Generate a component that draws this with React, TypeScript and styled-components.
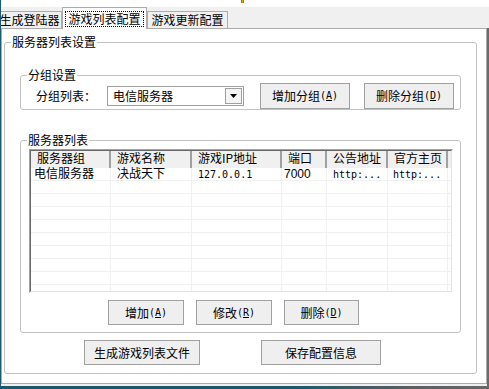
import React from "react";
import styled, { createGlobalStyle } from "styled-components";

const GlobalStyle = createGlobalStyle`
  html, body { margin: 0; padding: 0; background: #ffffff; }
  body {
    font-family: "Noto Sans CJK SC", "Noto Sans", sans-serif;
    font-size: 12px;
    color: #000;
  }
  * { box-sizing: border-box; }
`;

const Window = styled.div`
  width: 489px;
  height: 389px;
  display: flex;
  flex-direction: column;
  border-left: 1px solid #1c586e;
  background: #fff;
  overflow: hidden;
`;

const TopGap = styled.div`
  height: 7px;
  flex: none;
  display: flex;
`;

const Speck = styled.span`
  margin-left: 240px;
  width: 3px;
  height: 3px;
  background: linear-gradient(90deg, #d04020, #e0a020, #3060c0);
`;

const TabStrip = styled.div`
  height: 22px;
  flex: none;
  display: flex;
  align-items: flex-end;
  background: #f0f0f0;
`;

const Tab = styled.div<{ $active?: boolean; $w: number; $first?: boolean }>`
  position: ${(p) => (p.$active ? "relative" : "static")};
  z-index: ${(p) => (p.$active ? 2 : "auto")};
  flex: none;
  width: ${(p) => p.$w}px;
  height: ${(p) => (p.$active ? 22 : 18)}px;
  margin-left: ${(p) => (p.$first ? -5 : 0)}px;
  border: 1px solid #acacac;
  border-bottom: none;
  background: ${(p) => (p.$active ? "#ffffff" : "#f0f0f0")};
  display: flex;
  justify-content: center;
  align-items: flex-start;
  padding-top: ${(p) => (p.$active ? 3 : 2)}px;
  padding-left: ${(p) => (p.$first ? 1 : 0)}px;
  line-height: 12px;
  white-space: nowrap;
`;

const FocusText = styled.span`
  border: 1px dotted #000;
  padding: 0 2px 1px;
  line-height: 13px;
`;

const Middle = styled.div`
  flex: 1;
  margin-top: -1px;
  display: flex;
  align-items: flex-start;
  background: #f0f0f0;
`;

const Panel = styled.div`
  flex: none;
  width: 486px;
  height: 356px;
  border: 1px solid #acacac;
  background: #fff;
  padding: 7px 0 0 2px;
`;

const RightEdge = styled.div`
  flex: none;
  width: 2px;
  align-self: stretch;
  background: #6a6a6a;
`;

const BottomEdge = styled.div`
  height: 3px;
  flex: none;
  background: linear-gradient(90deg, #1d586d 0%, #1d586d 60%, #5a5f62 85%, #686868 100%);
`;

const Group = styled.fieldset<{ $pad: string; $w?: number; $mt?: number }>`
  margin: ${(p) => p.$mt ?? 0}px 0 0 0;
  min-width: 0;
  width: ${(p) => (p.$w ? `${p.$w}px` : "100%")};
  border: 1px solid #c2c2c2;
  border-radius: 3px;
  padding: ${(p) => p.$pad};
`;

const Legend = styled.legend<{ $offset: number }>`
  padding: 0 1px;
  margin-left: ${(p) => p.$offset}px;
  line-height: 12px;
  font-size: 12px;
`;

const ControlRow = styled.div`
  display: flex;
  align-items: center;
  height: 26px;
`;

const Label = styled.span`
  flex: none;
  width: 60px;
  margin-right: 11px;
  line-height: 12px;
  white-space: nowrap;
`;

const Combo = styled.div`
  flex: none;
  width: 137px;
  height: 20px;
  border: 1px solid #a0a0a0;
  background: #fff;
  display: flex;
  align-items: center;
  padding: 0 1px 0 5px;
`;

const ComboText = styled.span`
  flex: 1;
  line-height: 12px;
  white-space: nowrap;
`;

const DropButton = styled.span`
  flex: none;
  width: 17px;
  height: 16px;
  border: 1px solid #a0a0a0;
  background: #f4f4f4;
  display: flex;
  align-items: center;
  justify-content: center;
`;

const Button = styled.button<{ $w: number; $h: number; $ml?: number }>`
  flex: none;
  width: ${(p) => p.$w}px;
  height: ${(p) => p.$h}px;
  margin-left: ${(p) => p.$ml ?? 0}px;
  border: 1px solid #a0a0a0;
  background: #efefef;
  font-family: inherit;
  font-size: 12px;
  color: #000;
  padding: 0;
  line-height: 12px;
  display: flex;
  align-items: center;
  justify-content: center;
  white-space: nowrap;
`;

const Ascii = styled.span`
  font-family: "DejaVu Sans Mono", "Liberation Mono", monospace;
  font-size: 10px;
`;

const Sans = styled.span`
  font-family: "Liberation Sans", Arial, sans-serif;
  font-size: 12px;
`;

const U = styled.span`
  text-decoration: underline;
`;

const ButtonRow = styled.div<{ $mt: number; $ml: number; $gap: number }>`
  display: flex;
  margin-top: ${(p) => p.$mt}px;
  padding-left: ${(p) => p.$ml}px;
  gap: ${(p) => p.$gap}px;
`;

const ListOuter = styled.div`
  width: 424px;
  height: 144px;
  border: 1px solid;
  border-color: #a0a0a0 #ffffff #ffffff #a0a0a0;
`;

const ListInner = styled.div`
  height: 100%;
  border: 1px solid;
  border-color: #696969 #e3e3e3 #e3e3e3 #696969;
  overflow: hidden;
  background: #fff;
`;

const HeaderRow = styled.div`
  display: flex;
  height: 17px;
  background: #f0f0f0;
`;

const HeaderCell = styled.div<{ $w: number }>`
  flex: none;
  width: ${(p) => p.$w}px;
  padding-left: 6px;
  line-height: 11px;
  padding-top: 1px;
  border-right: 2px solid #a0a0a0;
  white-space: nowrap;
`;

const Row = styled.div`
  display: flex;
  height: 13px;
  flex: none;
  border-bottom: 1px solid #f0f0f0;
`;

const Cell = styled.div<{ $w: number; $pad: number }>`
  flex: none;
  width: ${(p) => p.$w}px;
  padding-left: ${(p) => p.$pad}px;
  border-right: 1px solid #f0f0f0;
  line-height: 9px;
  white-space: nowrap;
`;

const columns = [
  { title: "服务器组", w: 80 },
  { title: "游戏名称", w: 81 },
  { title: "游戏IP地址", w: 90 },
  { title: "端口", w: 45 },
  { title: "公告地址", w: 61 },
  { title: "官方主页", w: 60 },
];

const firstRow: React.ReactNode[] = [
  "电信服务器",
  "决战天下",
  <Ascii>127.0.0.1</Ascii>,
  <Sans>7000</Sans>,
  <Ascii>http:...</Ascii>,
  <Ascii>http:...</Ascii>,
];

const cellPad = [3, 6, 6, 2, 6, 5];

function Mnemonic({ text, k }: { text: string; k: string }) {
  return (
    <>
      {text}
      <Ascii>
        (<U>{k}</U>)
      </Ascii>
    </>
  );
}

function ListView() {
  const rows = Array.from({ length: 10 }, (_, i) => i);
  return (
    <ListOuter>
      <ListInner>
        <HeaderRow>
          {columns.map((c) => (
            <HeaderCell key={c.title} $w={c.w}>
              {c.title}
            </HeaderCell>
          ))}
        </HeaderRow>
        {rows.map((r) => (
          <Row key={r}>
            {columns.map((c, ci) => (
              <Cell key={c.title} $w={c.w} $pad={cellPad[ci]}>
                {r === 0 ? firstRow[ci] : null}
              </Cell>
            ))}
          </Row>
        ))}
      </ListInner>
    </ListOuter>
  );
}

export default function App() {
  return (
    <>
      <GlobalStyle />
      <Window>
        <TopGap>
          <Speck />
        </TopGap>
        <TabStrip>
          <Tab $w={66} $first>
            生成登陆器
          </Tab>
          <Tab $w={85} $active>
            <FocusText>游戏列表配置</FocusText>
          </Tab>
          <Tab $w={81}>游戏更新配置</Tab>
        </TabStrip>
        <Middle>
          <Panel>
            <Group $w={473} $pad="21px 15px 8px 15px">
              <Legend $offset={-9}>服务器列表设置</Legend>
              <Group $pad="2px 6px 0 15px">
                <Legend $offset={-9}>分组设置</Legend>
                <ControlRow>
                  <Label>分组列表：</Label>
                  <Combo>
                    <ComboText>电信服务器</ComboText>
                    <DropButton>
                      <svg width="7" height="4" viewBox="0 0 7 4">
                        <polygon points="0,0 7,0 3.5,4" fill="#000" />
                      </svg>
                    </DropButton>
                  </Combo>
                  <Button $w={90} $h={26} $ml={16}>
                    <Mnemonic text="增加分组" k="A" />
                  </Button>
                  <Button $w={90} $h={26} $ml={14}>
                    <Mnemonic text="删除分组" k="D" />
                  </Button>
                </ControlRow>
              </Group>
              <Group $mt={24} $pad="3px 7px 7px 8px">
                <Legend $offset={-2}>服务器列表</Legend>
                <ListView />
                <ButtonRow $mt={7} $ml={79} $gap={12}>
                  <Button $w={76} $h={25}>
                    <Mnemonic text="增加" k="A" />
                  </Button>
                  <Button $w={76} $h={25}>
                    <Mnemonic text="修改" k="R" />
                  </Button>
                  <Button $w={75} $h={25}>
                    <Mnemonic text="删除" k="D" />
                  </Button>
                </ButtonRow>
              </Group>
              <ButtonRow $mt={7} $ml={64} $gap={61}>
                <Button $w={116} $h={25}>生成游戏列表文件</Button>
                <Button $w={120} $h={25}>保存配置信息</Button>
              </ButtonRow>
            </Group>
          </Panel>
          <RightEdge />
        </Middle>
        <BottomEdge />
      </Window>
    </>
  );
}
